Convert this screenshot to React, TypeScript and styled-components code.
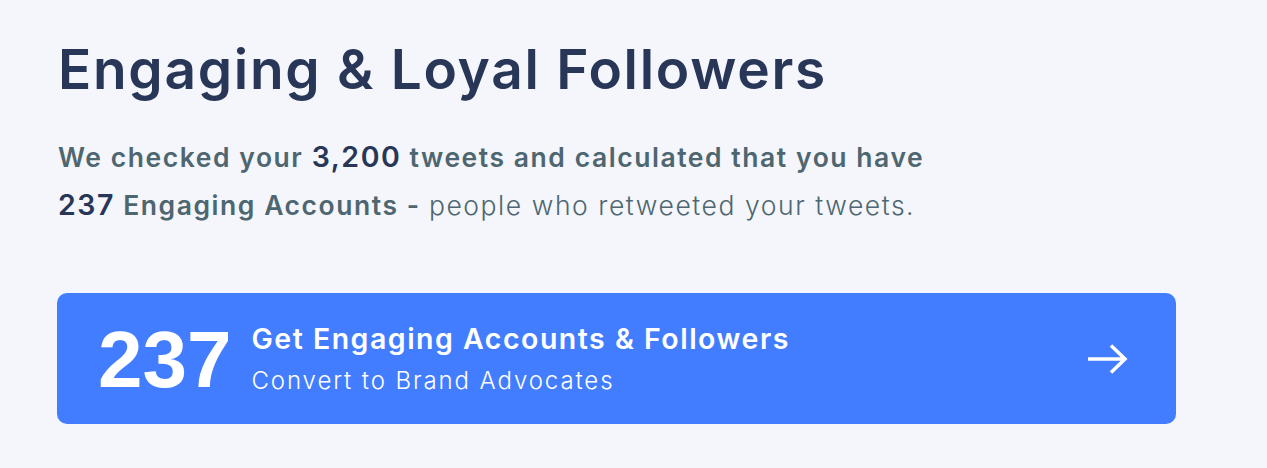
import React from "react"
import styled, { createGlobalStyle } from "styled-components"

const GlobalStyle = createGlobalStyle`
  html, body {
    margin: 0;
    padding: 0;
    background: #f4f6fb;
  }
  body {
    font-family: "Inter", "Open Sans", sans-serif;
    -webkit-font-smoothing: antialiased;
  }
`

const Page = styled.div`
  padding: 36px 57px 0;
  display: flex;
  flex-direction: column;
`

const Heading = styled.h1`
  margin: 0 0 0 1px;
  font-size: 55px;
  line-height: 66px;
  font-weight: 600;
  color: #283657;
  letter-spacing: 1.7px;
`

const Summary = styled.p`
  margin: 31px 0 0 1px;
  font-size: 26.5px;
  line-height: 47px;
  font-weight: 600;
  color: #4e6670;
  letter-spacing: 1.55px;
`

const Figure = styled.span`
  font-size: 28.5px;
  color: #283657;
`

const Plain = styled.span`
  font-weight: 300;
`

const Card = styled.a`
  margin-top: 64px;
  max-width: 1119px;
  height: 131px;
  box-sizing: border-box;
  padding: 0 48px 0 41px;
  display: flex;
  align-items: center;
  gap: 20px;
  background: #437dff;
  border-radius: 10px;
  color: #ffffff;
  text-decoration: none;
  cursor: pointer;
`

const Count = styled.span`
  font-family: "Liberation Sans", Arial, sans-serif;
  font-weight: 700;
  font-size: 80px;
  line-height: 1;
  margin-top: 2px;
`

const Labels = styled.div`
  flex: 1;
  display: flex;
  flex-direction: column;
  gap: 8px;
  margin-top: 1px;
`

const Title = styled.span`
  font-size: 28.5px;
  line-height: 36px;
  font-weight: 600;
  letter-spacing: 1.5px;
`

const Subtitle = styled.span`
  font-size: 24px;
  line-height: 32px;
  font-weight: 300;
  letter-spacing: 1.9px;
`

const Arrow = () => (
  <svg width="41" height="30" viewBox="0 0 41 30" fill="none">
    <path d="M1 15H38M24 1.5L38 15L24 28.5" stroke="#ffffff" strokeWidth="3.5" strokeLinejoin="miter" />
  </svg>
)

export default function App() {
  return (
    <>
      <GlobalStyle />
      <Page>
        <Heading>Engaging &amp; Loyal Followers</Heading>
        <Summary>
          We checked your <Figure>3,200</Figure> tweets and calculated that you have
          <br />
          <Figure>237</Figure> Engaging Accounts - <Plain>people who retweeted your tweets.</Plain>
        </Summary>
        <Card>
          <Count>237</Count>
          <Labels>
            <Title>Get Engaging Accounts &amp; Followers</Title>
            <Subtitle>Convert to Brand Advocates</Subtitle>
          </Labels>
          <Arrow />
        </Card>
      </Page>
    </>
  )
}
